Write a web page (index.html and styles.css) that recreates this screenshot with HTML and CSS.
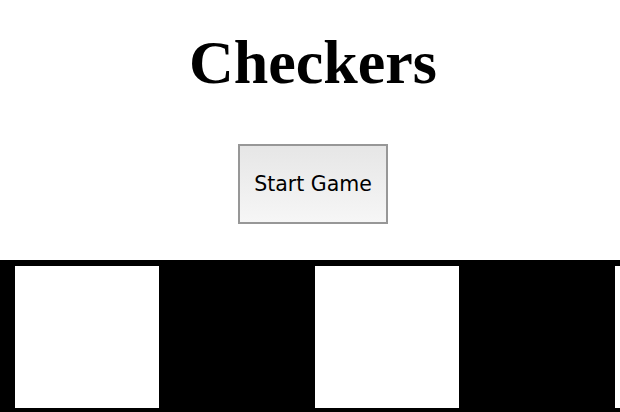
FILE: index.html
```html
<!DOCTYPE html>
<html>
<head>
<meta charset="utf-8">
<link rel="stylesheet" href="styles.css">
</head>
<body>
<div class="page">
  <h1 class="title">Checkers</h1>
  <div class="controls"><button class="start">Start Game</button></div>
  <div class="board">
    <div class="cell light"></div>
    <div class="cell dark"></div>
    <div class="cell light"></div>
    <div class="cell dark"></div>
    <div class="cell light"></div>
  </div>
</div>
</body>
</html>
```
FILE: styles.css
```css
html, body { margin: 0; padding: 0; background: #fff; }
body { width: 620px; height: 412px; overflow: hidden; }
.page { width: 626px; }
.title {
  margin: 0;
  padding-top: 26px;
  height: 118px;
  box-sizing: border-box;
  text-align: center;
  font-family: "Liberation Serif", "Times New Roman", serif;
  font-weight: bold;
  font-size: 62px;
  line-height: 72px;
  color: #000;
}
.controls { display: flex; justify-content: center; height: 142px; padding-top: 26px; box-sizing: border-box; }
.start {
  width: 150px;
  height: 80px;
  border: 2px solid #979797;
  background: linear-gradient(#e6e6e6, #f6f6f6);
  font-family: "DejaVu Sans", "Lucida Grande", sans-serif;
  font-size: 20.5px;
  color: #000;
  padding: 0;
  margin: 0;
}
.board {
  display: flex;
  background: #000;
  padding: 3px 0 1px 12px;
  overflow: hidden;
}
.cell { flex: 0 0 150px; height: 148px; box-sizing: border-box; border: 3px solid #000; }
.light { background: #fff; }
.dark { background: #000; }
```
